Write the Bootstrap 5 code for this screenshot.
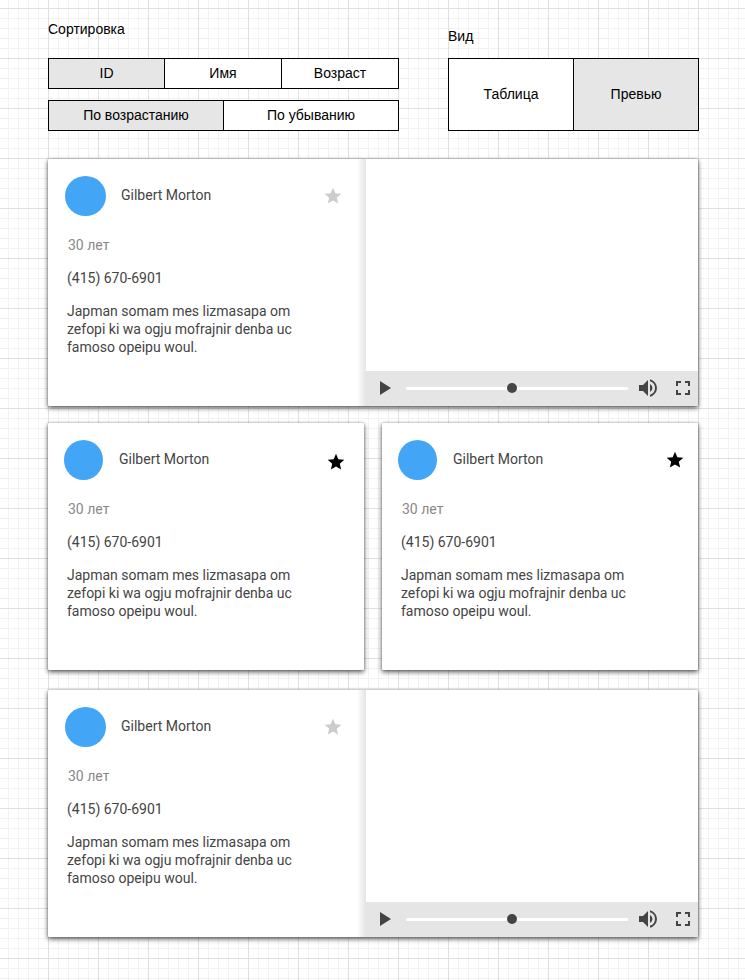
<!DOCTYPE html>
<html lang="ru">
<head>
<meta charset="utf-8">
<meta name="viewport" content="width=device-width, initial-scale=1">
<title>Сортировка</title>
<link href="https://cdn.jsdelivr.net/npm/bootstrap@5.3.0/dist/css/bootstrap.min.css" rel="stylesheet">
<style>
  body {
    min-height: 980px;
    color: #000;
    font: 14px/18px "Liberation Sans", Arial, sans-serif;
    background:
      linear-gradient(#e0e0e0 1px, transparent 1px) 0 8px / 50px 50px,
      linear-gradient(90deg, #e0e0e0 1px, transparent 1px) 48px 0 / 50px 50px,
      linear-gradient(#f2f2f2 1px, transparent 1px) 0 8px / 10px 10px,
      linear-gradient(90deg, #f2f2f2 1px, transparent 1px) 8px 0 / 10px 10px,
      #fff;
  }
  .page { width: 650px; margin-left: 48px; padding-top: 20px; }
  .controls { height: 139px; }
  .sort { width: 351px; }
  .view { width: 251px; margin-right: -1px; padding-top: 7px; }
  .sort-title { margin-bottom: 20px; }
  .view-title { margin-bottom: 13px; }
  .switch { background: #000; border: 1px solid #000; gap: 1px; height: 31px; }
  .switch-fields { margin-bottom: 11px; }
  .switch-tall { height: 73px; }
  .switch button { flex: 1 1 0; border: 0; padding: 0 0 2px; background: #fff; color: #000; }
  .switch .field-id { flex: 0 0 115px; }
  .switch button.active { background: #e6e6e6; }
  .person {
    font-family: Roboto, sans-serif;
    color: #444;
    height: 247px;
    border-radius: 1px;
    background: #fff;
    box-shadow: 0 2px 5px rgba(0,0,0,.65), 0 0 2px rgba(0,0,0,.3);
  }
  .half { width: 316px; }
  .info { padding: 17px 0 0 19px; }
  .wide .info { width: 318px; background: linear-gradient(90deg, transparent 309px, #e4e4e4) no-repeat; }
  .avatar { width: 39px; height: 40px; border-radius: 50%; background: #42a5f5; margin-left: -3px; }
  .wide .avatar { width: 41px; margin-left: -2px; }
  .name { margin-left: 16px; padding-bottom: 2px; }
  .wide .name { margin-left: 15px; }
  .star { width: 20px; height: 20px; margin: 0 18px 0 auto; fill: #000; }
  .star-low { margin-top: 3px; }
  .star-right { margin-right: 13px; }
  .wide .star { margin-right: 23px; margin-top: -1px; fill: #ccc; }
  .age { color: #888; margin: 20px 0 15px 1px; }
  .phone { margin-bottom: 15px; }
  .note { width: 250px; white-space: nowrap; }
  .video { padding-top: 1px; }
  .player { height: 35px; background: #e5e5e5; }
  .player svg { display: block; }
  .pair { margin: 17px 0 20px; }
</style>
</head>
<body>
<svg class="d-none">
  <symbol id="star" viewBox="0 0 24 24"><path d="M12 17.27 18.18 21l-1.64-7.03L22 9.24l-7.19-.61L12 2 9.19 8.63 2 9.24l5.46 4.73L5.82 21z"/></symbol>
  <symbol id="controls" viewBox="0 0 332 35">
    <path d="M14 10v14l11-7z" fill="#444"/>
    <path d="M41.5 17.5h219.500" stroke="#fff" stroke-width="3" stroke-linecap="round"/>
    <circle cx="146" cy="17" r="5" fill="#444"/>
    <g fill="#444">
      <path transform="translate(270 5)" d="M3 9v6h4l5 5V4L7 9zm13.5 3A4.5 4.5 0 0 0 14 7.97v8.05A4.5 4.5 0 0 0 16.500 12zM14 3.230v2.060a7 7 0 0 1 0 13.420v2.060a9 9 0 0 0 0-17.540z"/>
      <path transform="translate(305 5)" d="M7 14H5v5h5v-2H7zm-2-4h2V7h3V5H5zm12 7h-3v2h5v-5h-2zM14 5v2h3v3h2V5z"/>
    </g>
  </symbol>
</svg>

<main class="page">
  <div class="controls d-flex justify-content-between">
    <section class="sort">
      <div class="sort-title">Сортировка</div>
      <div class="switch switch-fields d-flex">
        <button class="field-id active">ID</button><button>Имя</button><button>Возраст</button>
      </div>
      <div class="switch d-flex">
        <button class="active">По возрастанию</button><button>По убыванию</button>
      </div>
    </section>
    <section class="view">
      <div class="view-title">Вид</div>
      <div class="switch switch-tall d-flex">
        <button>Таблица</button><button class="active">Превью</button>
      </div>
    </section>
  </div>

  <article class="person wide d-flex">
    <div class="info">
      <div class="d-flex align-items-center"><div class="avatar"></div><div class="name">Gilbert Morton</div><svg class="star"><use href="#star"/></svg></div>
      <div class="age">30 лет</div>
      <div class="phone">(415) 670-6901</div>
      <div class="note">Japman somam mes lizmasapa om<br>zefopi ki wa ogju mofrajnir denba uc<br>famoso opeipu woul.</div>
    </div>
    <div class="video flex-fill d-flex flex-column justify-content-end">
      <div class="player"><svg width="332" height="35"><use href="#controls"/></svg></div>
    </div>
  </article>

  <div class="pair d-flex justify-content-between">
    <article class="person half">
      <div class="info">
        <div class="d-flex align-items-center"><div class="avatar"></div><div class="name">Gilbert Morton</div><svg class="star star-low"><use href="#star"/></svg></div>
        <div class="age">30 лет</div>
        <div class="phone">(415) 670-6901</div>
        <div class="note">Japman somam mes lizmasapa om<br>zefopi ki wa ogju mofrajnir denba uc<br>famoso opeipu woul.</div>
      </div>
    </article>
    <article class="person half">
      <div class="info">
        <div class="d-flex align-items-center"><div class="avatar"></div><div class="name">Gilbert Morton</div><svg class="star star-right"><use href="#star"/></svg></div>
        <div class="age">30 лет</div>
        <div class="phone">(415) 670-6901</div>
        <div class="note">Japman somam mes lizmasapa om<br>zefopi ki wa ogju mofrajnir denba uc<br>famoso opeipu woul.</div>
      </div>
    </article>
  </div>

  <article class="person wide d-flex">
    <div class="info">
      <div class="d-flex align-items-center"><div class="avatar"></div><div class="name">Gilbert Morton</div><svg class="star"><use href="#star"/></svg></div>
      <div class="age">30 лет</div>
      <div class="phone">(415) 670-6901</div>
      <div class="note">Japman somam mes lizmasapa om<br>zefopi ki wa ogju mofrajnir denba uc<br>famoso opeipu woul.</div>
    </div>
    <div class="video flex-fill d-flex flex-column justify-content-end">
      <div class="player"><svg width="332" height="35"><use href="#controls"/></svg></div>
    </div>
  </article>
</main>
<script src="https://cdn.jsdelivr.net/npm/bootstrap@5.3.0/dist/js/bootstrap.bundle.min.js"></script>
</body>
</html>
